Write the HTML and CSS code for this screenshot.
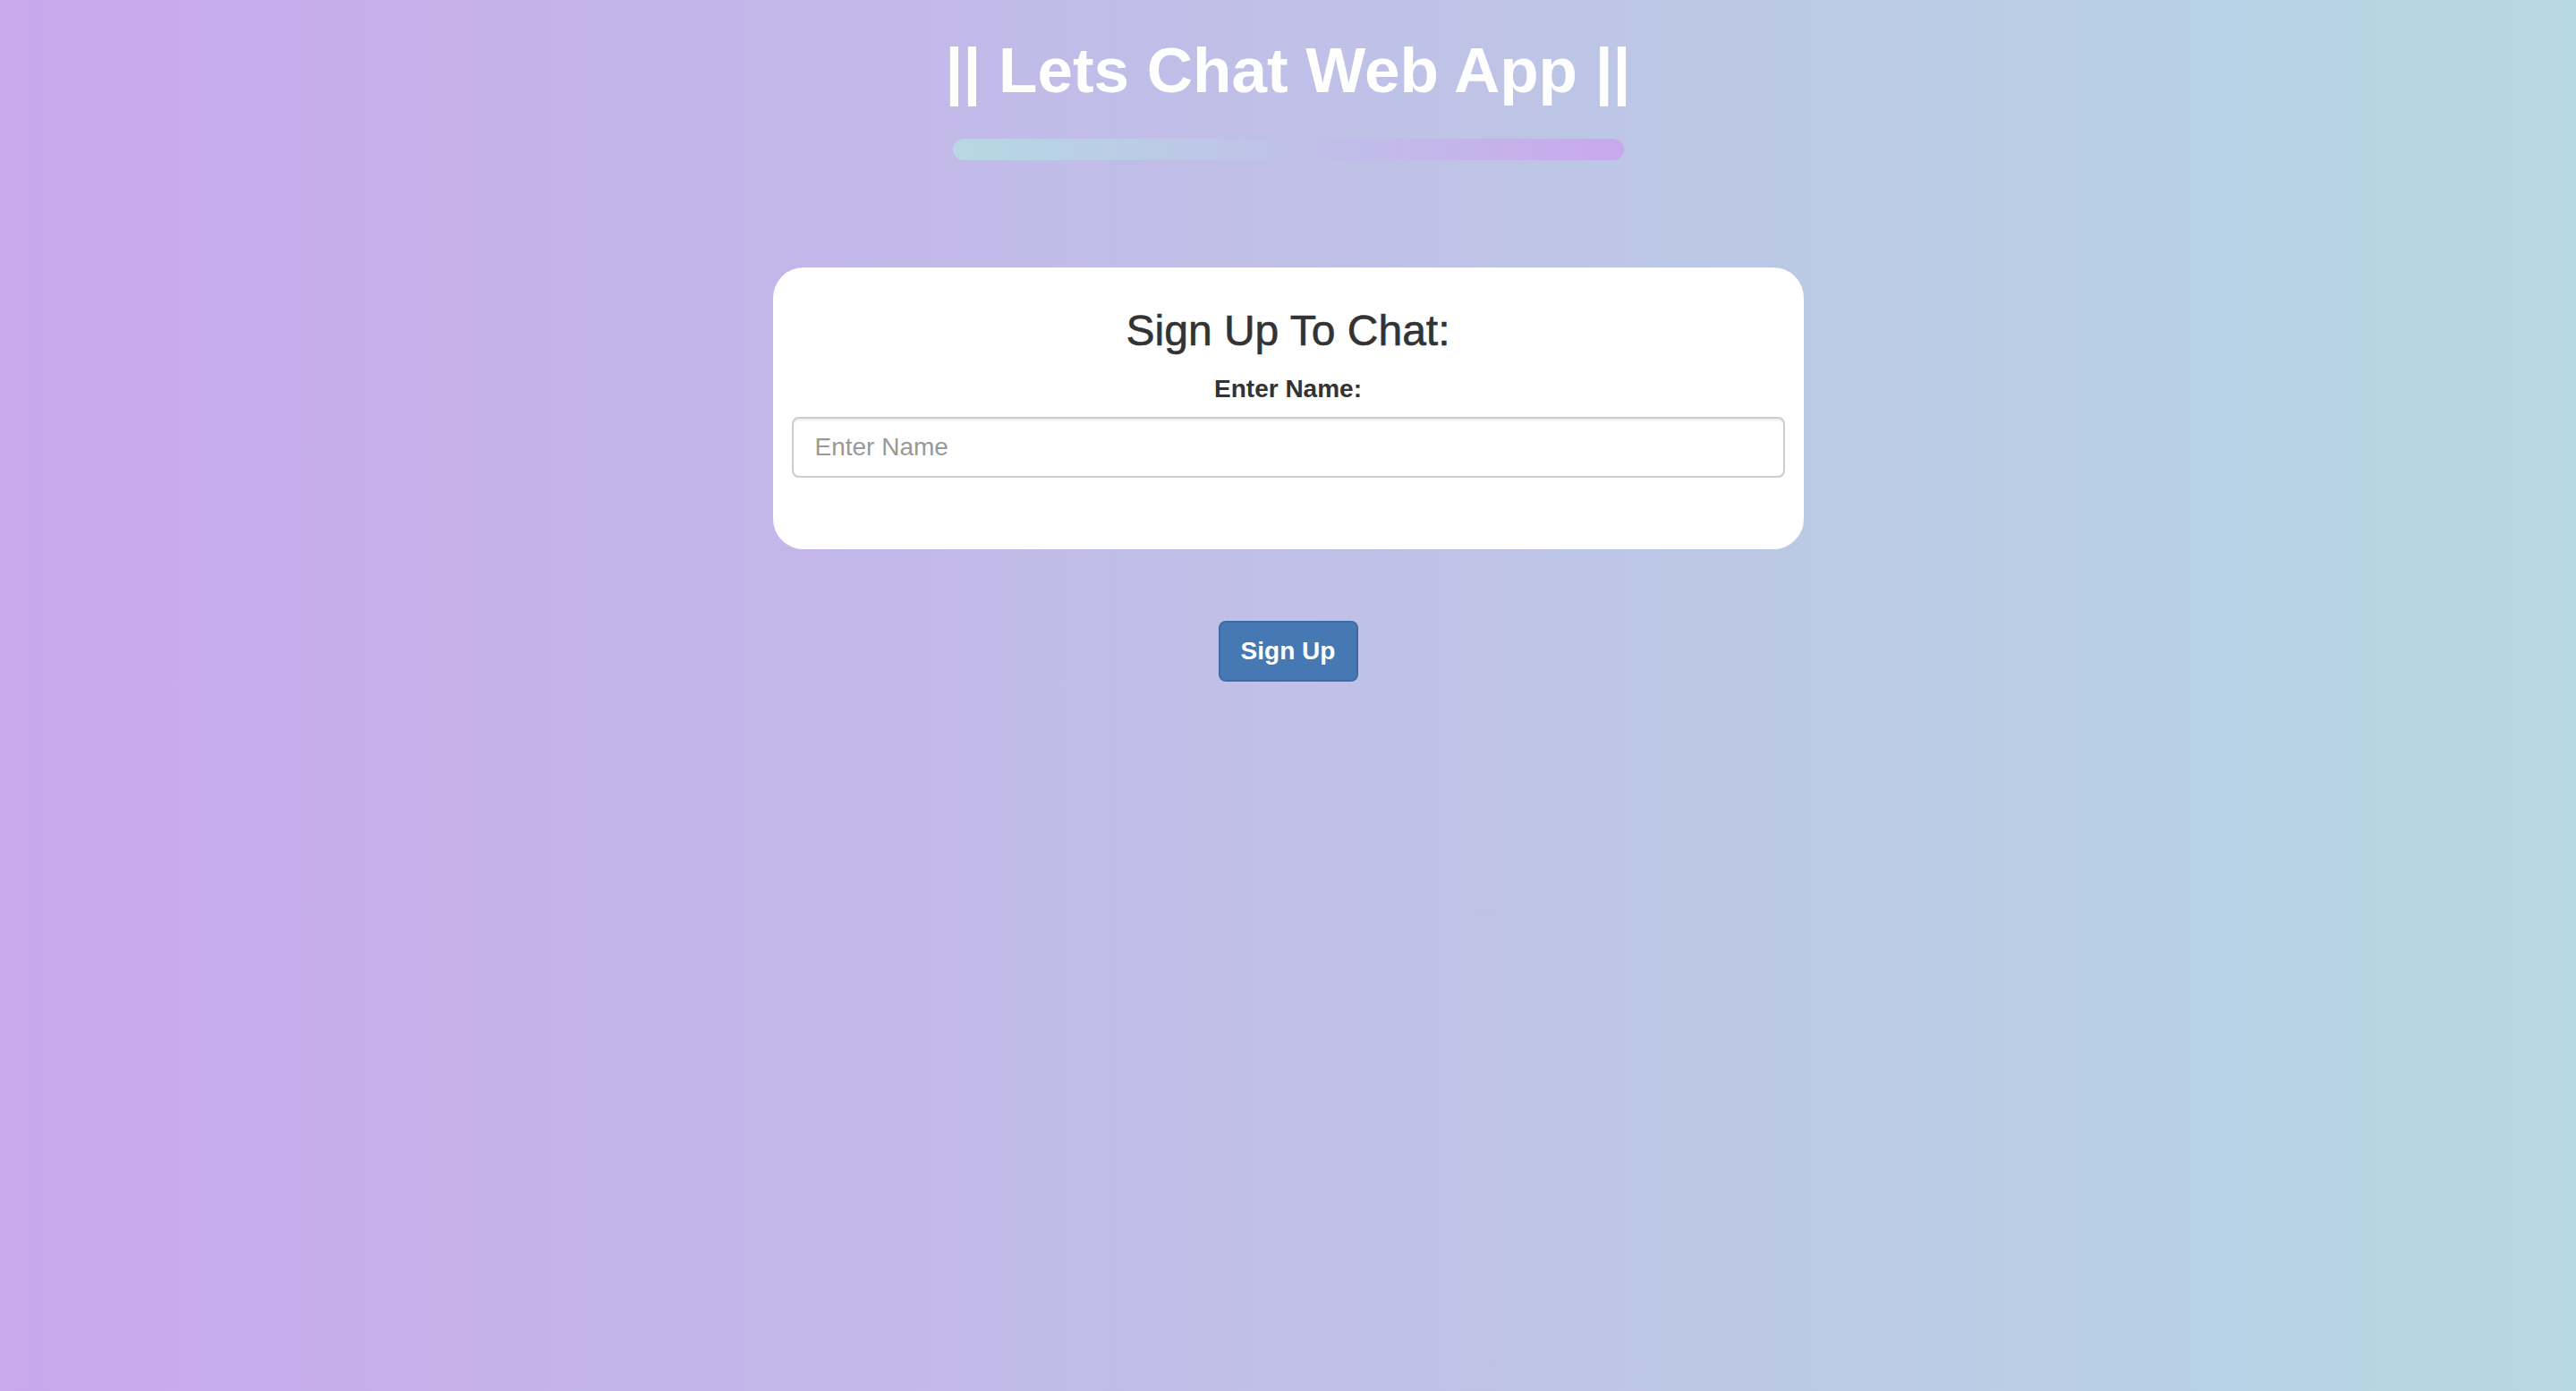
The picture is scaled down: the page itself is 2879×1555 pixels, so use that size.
FILE: index.html
```html
<!DOCTYPE html>
<html lang="en">
<head>
<meta charset="utf-8">
<title>Lets Chat Web App</title>
<link rel="stylesheet" href="styles.css">
</head>
<body>
<div class="page">
  <h1 class="title">|| Lets Chat Web App ||</h1>
  <div class="bar"></div>
  <div class="card">
    <h3 class="card-title">Sign Up To Chat:</h3>
    <label class="label" for="name">Enter Name:</label>
    <input class="input" id="name" type="text" placeholder="Enter Name">
  </div>
  <button class="btn" type="button">Sign Up</button>
</div>
</body>
</html>
```
FILE: styles.css
```css
html, body {
  margin: 0;
  padding: 0;
}
body {
  min-height: 100vh;
  background: linear-gradient(to right, #c9a8ec, #b6d8e3);
  font-family: "Liberation Sans", Arial, Helvetica, sans-serif;
  color: #333;
}
.page {
  display: flex;
  flex-direction: column;
  align-items: center;
  min-height: 100vh;
}
.title {
  margin: 40px 0 0;
  font-size: 71px;
  line-height: 1.1;
  font-weight: 700;
  color: #fff;
}
.bar {
  margin-top: 37px;
  width: 750px;
  height: 24px;
  border-radius: 12px;
  background: linear-gradient(to right, #b6d8e3, #bec4e8 45%, #c9a8ec);
}
.card {
  margin-top: 120px;
  width: 1152px;
  box-sizing: border-box;
  padding: 45px 21px 80px;
  background: #fff;
  border-radius: 34px;
  display: flex;
  flex-direction: column;
  align-items: center;
}
.card-title {
  margin: 0;
  font-size: 48px;
  line-height: 1.1;
  font-weight: 500;
  color: #333;
  -webkit-text-stroke: 0.6px #333;
}
.label {
  margin-top: 18px;
  font-size: 28px;
  line-height: 40px;
  font-weight: 700;
  color: #333;
}
.input {
  margin-top: 11px;
  width: 100%;
  height: 68px;
  box-sizing: border-box;
  padding: 0 24px;
  border: 2px solid #ccc;
  border-radius: 8px;
  box-shadow: inset 0 2px 2px rgba(0, 0, 0, 0.075);
  font-family: "Liberation Sans", Arial, Helvetica, sans-serif;
  font-size: 28px;
  color: #555;
  background: #fff;
  outline: none;
}
.input::placeholder {
  color: #999;
}
.btn {
  margin-top: 80px;
  width: 156px;
  height: 68px;
  box-sizing: border-box;
  border: 2px solid #3b6ca3;
  border-radius: 8px;
  background: #4679b3;
  color: #fff;
  font-family: "Liberation Sans", Arial, Helvetica, sans-serif;
  font-size: 28px;
  font-weight: 700;
  padding: 0;
  cursor: pointer;
}
```
